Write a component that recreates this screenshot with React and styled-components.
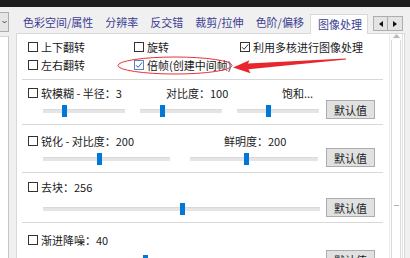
import React from "react";
import styled, { createGlobalStyle } from "styled-components";

const GlobalStyle = createGlobalStyle`
  body {
    margin: 0;
    background: #f0f0f0;
    font-family: "Noto Sans CJK SC", "Noto Sans", sans-serif;
  }
`;

const tabs = ["色彩空间/属性", "分辨率", "反交错", "裁剪/拉伸", "色阶/偏移"];

function CheckBox({ checked, tone }) {
  return (
    <Box tone={tone}>
      {checked && (
        <svg width="8" height="8" viewBox="0 0 8 8">
          <path d="M1 4.2 L3.1 6.3 L7.2 1.4" fill="none" stroke={tone === "blue" ? "#2f62b0" : "#333"} strokeWidth="1" />
        </svg>
      )}
    </Box>
  );
}

function Option({ label, checked, tone }) {
  return (
    <OptionItem>
      <CheckBox checked={checked} tone={tone} />
      <span>{label}</span>
    </OptionItem>
  );
}

function Slider({ width, pos }) {
  return (
    <Track width={width}>
      <Thumb pos={pos} />
    </Track>
  );
}

function App() {
  return (
    <Window>
      <GlobalStyle />
      <TopBar />
      <Main>
        <LeftStub>
          <Combo>
            <svg width="5" height="4" viewBox="0 0 5 4">
              <path d="M0.5 1 L2.5 3 L4.5 1" fill="none" stroke="#444" strokeWidth="1" />
            </svg>
          </Combo>
          <SidePanel />
        </LeftStub>
        <TabControl>
          <TabRow>
            {tabs.map((t) => (
              <Tab key={t}>{t}</Tab>
            ))}
            <Tab active>图像处理</Tab>
            <ArrowGroup>
              <ArrowBtn>
                <svg width="4" height="6" viewBox="0 0 4 6">
                  <path d="M4 0 L0 3 L4 6 Z" fill="#111" />
                </svg>
              </ArrowBtn>
              <ArrowBtn>
                <svg width="4" height="6" viewBox="0 0 4 6">
                  <path d="M0 0 L4 3 L0 6 Z" fill="#111" />
                </svg>
              </ArrowBtn>
            </ArrowGroup>
          </TabRow>
          <Page>
            <Content>
              <Options>
                <Option label="上下翻转" />
                <Option label="旋转" />
                <Option label="利用多核进行图像处理" checked />
                <Option label="左右翻转" />
                <Option label="倍帧(创建中间帧)" checked tone="blue" />
              </Options>
              <Separator />

              <Section pad={5}>
                <SectionBody>
                  <LabelRow cols="138px 116px auto">
                    <Option label="软模糊 - 半径：3" />
                    <Label>对比度：100</Label>
                    <Label>饱和...</Label>
                  </LabelRow>
                  <SliderRow gap={15} top={2}>
                    <Slider width={82} pos={26} />
                    <Slider width={82} pos={27} />
                    <Slider width={82} pos={38} />
                  </SliderRow>
                </SectionBody>
                <Button>默认值</Button>
              </Section>
              <Separator />

              <Section pad={8}>
                <SectionBody>
                  <LabelRow cols="196px auto">
                    <Option label="锐化 - 对比度：200" />
                    <Label>鲜明度：200</Label>
                  </LabelRow>
                  <SliderRow gap={20} top={2}>
                    <Slider width={127} pos={44} />
                    <Slider width={128} pos={44} />
                  </SliderRow>
                </SectionBody>
                <Button>默认值</Button>
              </Section>
              <Separator />

              <Section pad={6}>
                <SectionBody>
                  <LabelRow cols="auto">
                    <Option label="去块：256" />
                  </LabelRow>
                  <SliderRow gap={0} top={6}>
                    <Slider width={277} pos={50} />
                  </SliderRow>
                </SectionBody>
                <Button>默认值</Button>
              </Section>
              <Separator />

              <Section pad={9}>
                <SectionBody>
                  <LabelRow cols="auto">
                    <Option label="渐进降噪：40" />
                  </LabelRow>
                  <SliderRow gap={0} top={5}>
                    <Slider width={277} pos={37} />
                  </SliderRow>
                </SectionBody>
                <Button>默认值</Button>
              </Section>
            </Content>
            <ScrollBar>
              <ScrollUp>
                <svg width="7" height="4" viewBox="0 0 7 4">
                  <path d="M0 4 L3.5 0 L7 4 Z" fill="#b8b8b8" />
                </svg>
              </ScrollUp>
              <ScrollThumb>
                <Grip />
              </ScrollThumb>
            </ScrollBar>
          </Page>
        </TabControl>
      </Main>
      <Annotation width="410" height="258" viewBox="0 0 410 258">
        <ellipse cx="175" cy="65.5" rx="57" ry="8.5" fill="none" stroke="#e8323c" strokeWidth="1" />
        <path d="M346 58.6 L248 63.6 L249.5 60.2 L233 67.6 L250.5 73.2 L248.5 69.2 L346 59.6 Z" fill="#e8262e" />
      </Annotation>
    </Window>
  );
}

const Window = styled.div`
  position: relative;
  width: 410px;
  height: 258px;
  overflow: hidden;
  display: flex;
  flex-direction: column;
  background: #f0f0f0;
  font-size: 11px;
  color: #1a1a1a;
`;

const TopBar = styled.div`
  height: 7px;
  flex-shrink: 0;
  background: #1f1f1f;
`;

const Main = styled.div`
  flex: 1;
  display: flex;
  min-height: 0;
`;

const LeftStub = styled.div`
  width: 9px;
  flex-shrink: 0;
  display: flex;
  flex-direction: column;
`;

const Combo = styled.div`
  margin-top: 5px;
  height: 20px;
  box-sizing: border-box;
  background: #e5e5e5;
  border: 1px solid #adadad;
  border-left: none;
  display: flex;
  align-items: center;
  padding-left: 2px;
`;

const SidePanel = styled.div`
  margin-top: 4px;
  flex: 1;
  background: #fff;
  border-top: 1px solid #d4d4d4;
  border-right: 1px solid #c6c6c6;
`;

const TabControl = styled.div`
  flex: 1;
  margin-left: 7px;
  margin-right: 5px;
  display: flex;
  flex-direction: column;
  min-width: 0;
`;

const TabRow = styled.div`
  height: 26px;
  flex-shrink: 0;
  display: flex;
  align-items: flex-end;
  padding-left: 1px;
  position: relative;
  z-index: 1;
`;

const Tab = styled.div`
  height: ${(p) => (p.active ? "20px" : "18px")};
  padding: ${(p) => (p.active ? "0 5px 0 7px" : "0 6px")};
  box-sizing: border-box;
  display: flex;
  align-items: center;
  white-space: nowrap;
  color: #3d3d92;
  background: ${(p) => (p.active ? "#fff" : "transparent")};
  border: ${(p) => (p.active ? "1px solid #d9d9d9" : "none")};
  border-bottom: none;
  margin-bottom: ${(p) => (p.active ? "-1px" : "2px")};
  padding-bottom: ${(p) => (p.active ? "1px" : "0")};
`;

const ArrowGroup = styled.div`
  margin-left: auto;
  margin-right: 2px;
  margin-bottom: 2px;
  display: flex;
`;

const ArrowBtn = styled.div`
  width: 15px;
  height: 15px;
  box-sizing: border-box;
  background: #e4e4e4;
  border: 1px solid #adadad;
  & + & {
    border-left: none;
  }
  display: flex;
  align-items: center;
  justify-content: center;
`;

const Page = styled.div`
  flex: 1;
  display: flex;
  background: #fff;
  border: 1px solid #d9d9d9;
  border-bottom: none;
  min-height: 0;
`;

const Content = styled.div`
  flex: 1;
  padding: 0 6px 0 5px;
  display: flex;
  flex-direction: column;
`;

const Options = styled.div`
  padding: 4px 0 5px 6px;
  display: grid;
  grid-template-columns: 106px 106px auto;
  grid-auto-rows: 18px;
`;

const OptionItem = styled.div`
  display: flex;
  align-items: center;
  white-space: nowrap;
`;

const Box = styled.div`
  width: 10px;
  height: 10px;
  box-sizing: border-box;
  border: 1px solid ${(p) => (p.tone === "blue" ? "#5b82c2" : "#333")};
  background: #fff;
  margin-right: 3px;
  display: flex;
  align-items: center;
  justify-content: center;
  flex-shrink: 0;
`;

const Label = styled.span`
  white-space: nowrap;
`;

const Separator = styled.div`
  height: 1px;
  flex-shrink: 0;
  background: #d8d8d8;
`;

const Section = styled.div`
  display: flex;
  align-items: flex-end;
  padding: ${(p) => p.pad}px 8px 5px 0;
`;

const SectionBody = styled.div`
  flex: 1;
  display: flex;
  flex-direction: column;
`;

const LabelRow = styled.div`
  height: 16px;
  padding-left: 6px;
  display: grid;
  grid-template-columns: ${(p) => p.cols};
  align-items: center;
`;

const SliderRow = styled.div`
  height: 16px;
  margin-top: ${(p) => p.top}px;
  padding-left: 21px;
  display: flex;
  align-items: center;
  gap: ${(p) => p.gap}px;
`;

const Track = styled.div`
  position: relative;
  width: ${(p) => p.width}px;
  height: 4px;
  background: #e5e5e5;
  border-top: 1px solid #dadada;
  box-sizing: border-box;
`;

const Thumb = styled.div`
  position: absolute;
  left: ${(p) => p.pos}%;
  top: -5px;
  width: 5px;
  height: 12px;
  margin-left: -2px;
  background: #0078d7;
`;

const Button = styled.div`
  width: 49px;
  height: 19px;
  box-sizing: border-box;
  flex-shrink: 0;
  background: #e1e1e1;
  border: 1px solid #adadad;
  display: flex;
  align-items: center;
  justify-content: center;
  color: #1a1a1a;
`;

const ScrollBar = styled.div`
  width: 12px;
  flex-shrink: 0;
  margin-right: 1px;
  border-left: 1px solid #ececec;
  border-right: 1px solid #e4e4e4;
  background: #fbfbfb;
  display: flex;
  flex-direction: column;
`;

const ScrollUp = styled.div`
  height: 12px;
  display: flex;
  align-items: center;
  justify-content: center;
`;

const ScrollThumb = styled.div`
  height: 330px;
  flex-shrink: 0;
  margin: 2px 1px 0;
  background: #fff;
  border-left: 1px solid #dcdcdc;
  border-right: 1px solid #dcdcdc;
  display: flex;
  align-items: center;
  justify-content: center;
`;

const Grip = styled.div`
  width: 5px;
  height: 1px;
  background: #b0b0b0;
`;

const Annotation = styled.svg`
  position: absolute;
  left: 0;
  top: 0;
  pointer-events: none;
`;

export default App;
